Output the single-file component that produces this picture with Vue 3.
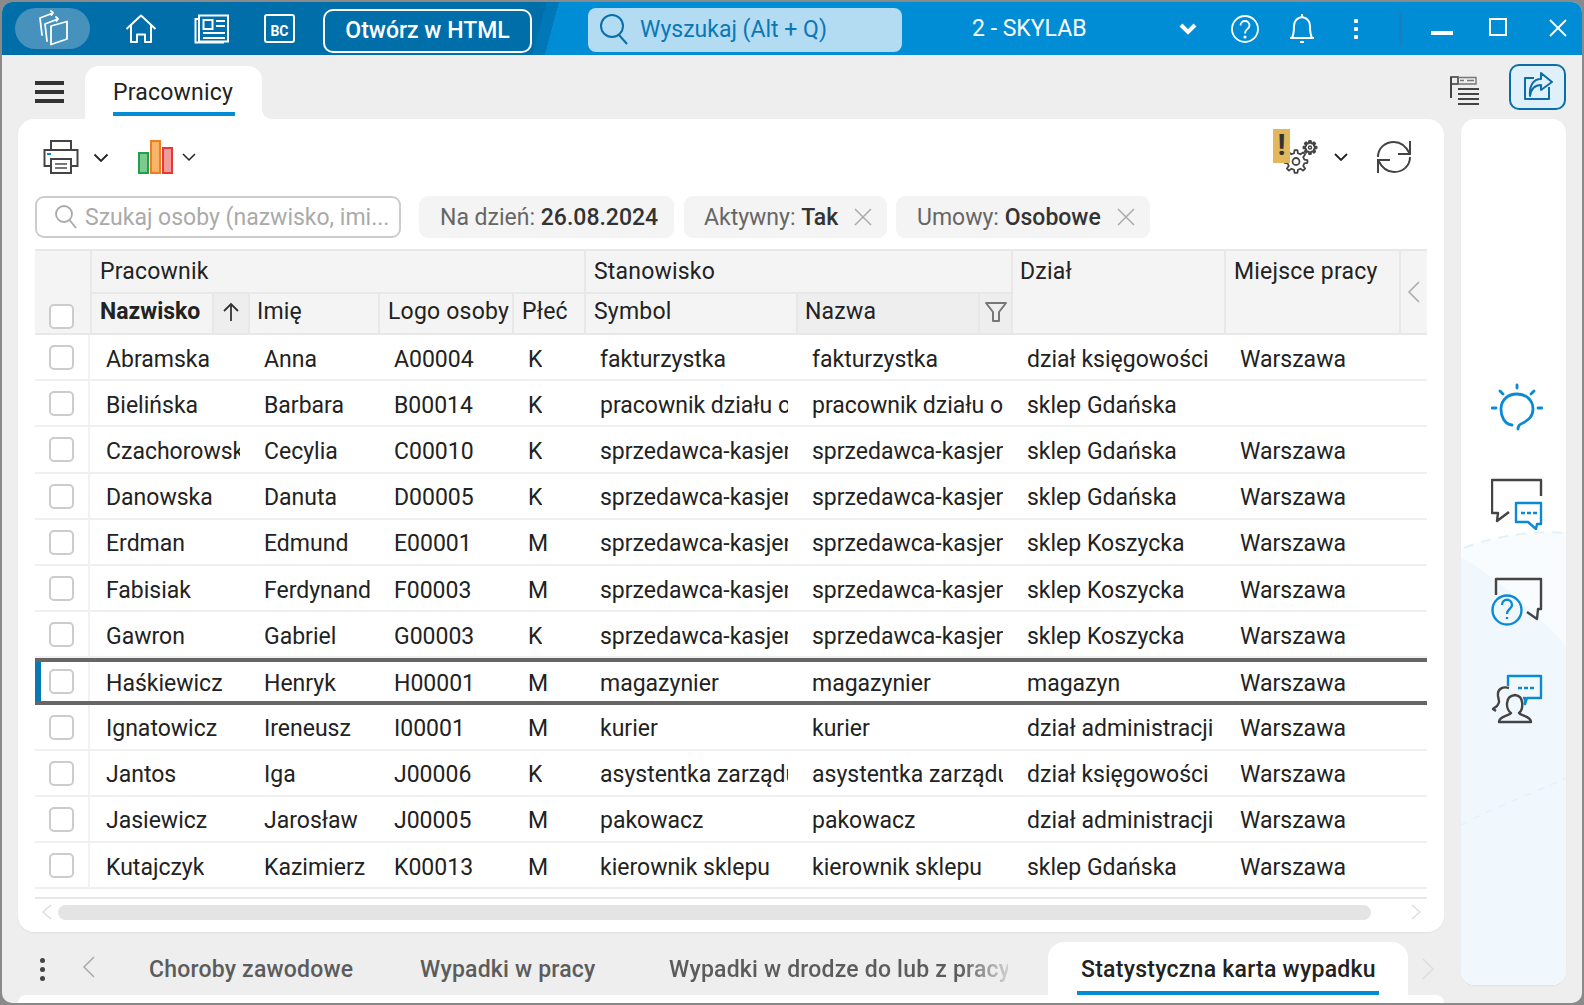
<script setup>
const rows = [
  ['Abramska','Anna','A00004','K','fakturzystka','fakturzystka','dział księgowości','Warszawa'],
  ['Bielińska','Barbara','B00014','K','pracownik działu obsługi','pracownik działu obsługi','sklep Gdańska',''],
  ['Czachorowska','Cecylia','C00010','K','sprzedawca-kasjer','sprzedawca-kasjer','sklep Gdańska','Warszawa'],
  ['Danowska','Danuta','D00005','K','sprzedawca-kasjer','sprzedawca-kasjer','sklep Gdańska','Warszawa'],
  ['Erdman','Edmund','E00001','M','sprzedawca-kasjer','sprzedawca-kasjer','sklep Koszycka','Warszawa'],
  ['Fabisiak','Ferdynand','F00003','M','sprzedawca-kasjer','sprzedawca-kasjer','sklep Koszycka','Warszawa'],
  ['Gawron','Gabriel','G00003','K','sprzedawca-kasjer','sprzedawca-kasjer','sklep Koszycka','Warszawa'],
  ['Haśkiewicz','Henryk','H00001','M','magazynier','magazynier','magazyn','Warszawa'],
  ['Ignatowicz','Ireneusz','I00001','M','kurier','kurier','dział administracji','Warszawa'],
  ['Jantos','Iga','J00006','K','asystentka zarządu','asystentka zarządu','dział księgowości','Warszawa'],
  ['Jasiewicz','Jarosław','J00005','M','pakowacz','pakowacz','dział administracji','Warszawa'],
  ['Kutajczyk','Kazimierz','K00013','M','kierownik sklepu','kierownik sklepu','sklep Gdańska','Warszawa'],
]
function gear(cx, cy, ro, ri, n) {
  const pts = []
  const step = (Math.PI * 2) / n
  for (let i = 0; i < n; i++) {
    const a = i * step
    const w = step * 0.2
    pts.push([ri, a - w * 1.5], [ro, a - w * 0.8], [ro, a + w * 0.8], [ri, a + w * 1.5])
  }
  return pts
    .map(([r, a], i) => `${i ? 'L' : 'M'}${(cx + r * Math.cos(a)).toFixed(2)} ${(cy + r * Math.sin(a)).toFixed(2)}`)
    .join(' ') + ' Z'
}
const gearBig = gear(23, 27.5, 11.5, 8.5, 8)
const gearSmall = gear(37, 13.5, 6.5, 4.5, 8)
</script>

<template>
  <div class="window">
    <header class="topbar">
      <div class="brand">
        <svg width="38" height="40" viewBox="0 0 38 40" fill="none" stroke="#fff" stroke-width="1.800" stroke-linejoin="round" stroke-linecap="round">
          <path d="M17 17 L33 12.500 V30 L17 35.500 Z" />
          <path d="M13 32 L11 15 L24 10 M22 8 L24 10 L22.500 12" />
          <path d="M8 26 L6 9 L19 4 M17 2 L19 4 L17.500 6" />
        </svg>
      </div>
      <svg class="ic-home" width="32" height="30" viewBox="0 0 32 30" fill="none" stroke="#fff" stroke-width="2" stroke-linejoin="round">
        <path d="M1.500 15 L16 1.500 L30.500 15" />
        <path d="M6 11 V28 H12 V20.500 H20 V28 H26 V11" />
      </svg>
      <svg class="ic-news" width="36" height="30" viewBox="0 0 36 30" fill="none" stroke="#fff" stroke-width="2">
        <rect x="5" y="1.500" width="29" height="26" />
        <path d="M5 5 H1.500 V28.500 H30" />
        <rect x="9.500" y="6" width="9" height="9" />
        <path d="M22 7 H31 M22 12 H31 M9 19 H31 M9 24 H31" />
      </svg>
      <div class="ic-bc"><span>BC</span></div>
      <button class="html-btn">Otwórz w HTML</button>
      <div class="top-search">
        <svg width="34" height="34" viewBox="0 0 34 34" fill="none" stroke="#0a6ea8" stroke-width="2">
          <circle cx="15" cy="13" r="11" />
          <path d="M22 22 L30 31" />
        </svg>
        <span>Wyszukaj (Alt + Q)</span>
      </div>
      <div class="company">2 - SKYLAB</div>
      <svg class="ic-chev" width="18" height="14" viewBox="0 0 18 14" fill="none" stroke="#fff" stroke-width="4"><path d="M2 3 L9 10 L16 3" /></svg>
      <svg class="ic-help" width="30" height="30" viewBox="0 0 30 30" fill="none" stroke="#fff" stroke-width="1.800">
        <circle cx="15" cy="15" r="13" />
        <path d="M10.500 11.500 C10.500 5.500 19.500 5.500 19.500 11.500 C19.500 15 15 15 15 19.500" />
        <circle cx="15" cy="23" r="0.700" />
      </svg>
      <svg class="ic-bell" width="26" height="32" viewBox="0 0 26 32" fill="none" stroke="#fff" stroke-width="2" stroke-linejoin="round">
        <path d="M3 25 C5 21 5 17 5 13 C5 8 8 5 13 4 C18 5 21 8 21 13 C21 17 21 21 23 25 Z" />
        <path d="M13 1 V4 M1 25 H25" />
        <path d="M11 29 H15" />
      </svg>
      <div class="ic-dots"><i></i><i></i><i></i></div>
      <div class="top-div"></div>
      <div class="win-min"></div>
      <div class="win-max"></div>
      <svg class="win-close" width="20" height="18" viewBox="0 0 20 18" fill="none" stroke="#fff" stroke-width="1.800"><path d="M2 1 L18 17 M18 1 L2 17" /></svg>
    </header>

    <div class="tabs-row">
      <div class="hamburger"><i></i><i></i><i></i></div>
      <div class="main-tab"><span>Pracownicy</span></div>
      <svg class="ic-flaglist" width="34" height="30" viewBox="0 0 34 30" fill="none" stroke="#444" stroke-width="2">
        <path d="M2 1 V22" />
        <rect x="2" y="1" width="7" height="7" stroke-width="1.600" />
        <path d="M9 1.500 H27 V8 H9" stroke="#777" stroke-width="1.400" />
        <path d="M11 4.500 H15 M18 4.500 H25" stroke="#777" stroke-width="1.400" />
        <path d="M9 13 H30 M9 18 H30 M9 23 H30 M9 28 H30" />
      </svg>
      <div class="share-btn">
        <svg width="30" height="30" viewBox="0 0 30 30" fill="none" stroke="#0a6ea8" stroke-width="2" stroke-linejoin="round">
          <path d="M11 6 H2 V27 H26 V15" />
          <path d="M18 1 L29 10 L18 18 V13 C12 13 8 17 7 24 C6 14 10 7 18 7 Z" />
        </svg>
      </div>
    </div>

    <div class="body">
      <div class="column">
        <main class="card">
          <div class="toolbar">
            <svg width="36" height="34" viewBox="0 0 36 34" fill="none" stroke="#444" stroke-width="2">
              <path d="M8 10 V1 H28 V10" />
              <path d="M8 26 H1.500 V10 H34.500 V26 H28" />
              <rect x="8" y="19" width="20" height="14" />
              <path d="M12 24 H24 M12 28 H24" stroke="#777" />
              <path d="M4 14 H8" stroke="#0a8ad4" />
            </svg>
            <svg class="chev" width="16" height="10" viewBox="0 0 16 10" fill="none" stroke="#222" stroke-width="1.800"><path d="M1.500 1.500 L8 8 L14.500 1.500" /></svg>
            <svg class="ic-chart" width="36" height="34" viewBox="0 0 36 34">
              <rect x="1" y="13" width="9" height="20" fill="#7dc98f" stroke="#1fa049" stroke-width="2" />
              <rect x="13" y="1" width="9" height="32" fill="#f8b468" stroke="#ef7d22" stroke-width="2" />
              <rect x="25" y="8" width="9" height="25" fill="#f29b9b" stroke="#e53935" stroke-width="2" />
            </svg>
            <svg class="chev chev2" width="14" height="9" viewBox="0 0 14 9" fill="none" stroke="#222" stroke-width="1.500"><path d="M1 1 L7 7 L13 1" /></svg>
            <div class="spacer"></div>
            <div class="gears">
              <svg width="46" height="46" viewBox="0 0 46 46" fill="none" stroke="#444" stroke-width="1.800" stroke-linejoin="round">
                <path :d="gearBig" />
                <circle cx="23" cy="27.500" r="3.500" />
                <path :d="gearSmall" stroke-width="2" />
                <circle cx="37" cy="13.500" r="1.500" stroke-width="1.400" />
              </svg>
              <div class="warn">!</div>
            </div>
            <svg class="chev chev3" width="14" height="9" viewBox="0 0 14 9" fill="none" stroke="#222" stroke-width="1.800"><path d="M1 1 L7 7 L13 1" /></svg>
            <svg class="ic-refresh" width="36" height="34" viewBox="0 0 36 34" fill="none" stroke="#444" stroke-width="2">
              <path d="M2 17 C2 8 9 2 18 2 C25 2 30 6 34 14 M34 1 V14 H22" />
              <path d="M34 17 C34 26 27 32 18 32 C11 32 6 28 2 20 M2 33 V20 H14" />
            </svg>
          </div>

          <div class="filters">
            <div class="search">
              <svg width="24" height="26" viewBox="0 0 24 26" fill="none" stroke="#aaa" stroke-width="1.800">
                <circle cx="10" cy="10" r="8" />
                <path d="M15.500 16 L22 24" />
              </svg>
              <span>Szukaj osoby (nazwisko, imi...</span>
            </div>
            <div class="chip c1"><span class="lbl">Na dzień: </span><b>26.08.2024</b></div>
            <div class="chip c2">
              <span class="lbl">Aktywny: </span><b>Tak</b>
              <svg width="18" height="18" viewBox="0 0 18 18" stroke="#aaa" stroke-width="1.500"><path d="M1 1 L17 17 M17 1 L1 17" /></svg>
            </div>
            <div class="chip c3">
              <span class="lbl">Umowy: </span><b>Osobowe</b>
              <svg width="18" height="18" viewBox="0 0 18 18" stroke="#aaa" stroke-width="1.500"><path d="M1 1 L17 17 M17 1 L1 17" /></svg>
            </div>
          </div>

          <div class="thead">
            <div class="th chk-h"><span class="cb"></span></div>
            <div class="th g1">Pracownik</div>
            <div class="th g2">Stanowisko</div>
            <div class="th g3">Dział</div>
            <div class="th g4">Miejsce pracy</div>
            <div class="th g5">
              <svg width="14" height="24" viewBox="0 0 14 24" fill="none" stroke="#aaa" stroke-width="1.500"><path d="M12 2 L2 12 L12 22" /></svg>
            </div>
            <div class="th sub nazw"><b>Nazwisko</b><span class="sort">
              <svg width="18" height="20" viewBox="0 0 18 20" fill="none" stroke="#333" stroke-width="1.800"><path d="M9 19 V2 M2 9 L9 2 L16 9" /></svg>
            </span></div>
            <div class="th sub imie">Imię</div>
            <div class="th sub">Logo osoby</div>
            <div class="th sub">Płeć</div>
            <div class="th sub">Symbol</div>
            <div class="th sub nazwa"><span class="nm">Nazwa</span><span class="flt">
              <svg width="24" height="22" viewBox="0 0 24 22" fill="none" stroke="#777" stroke-width="2" stroke-linejoin="round"><path d="M2 2 H22 L15 11 V20 H9 V11 Z" /></svg>
            </span></div>
          </div>

          <div class="rows">
            <div v-for="(r, i) in rows" :key="i" class="row" :class="{ sel: r[0] === 'Haśkiewicz' }">
              <div class="td chk"><span class="cb"></span></div>
              <div v-for="(c, j) in r" :key="j" class="td"><span>{{ c }}</span></div>
              <div class="td"></div>
            </div>
          </div>

          <div class="scroll">
            <svg width="12" height="16" viewBox="0 0 12 16" fill="none" stroke="#ddd" stroke-width="1.500"><path d="M10 1 L2 8 L10 15" /></svg>
            <div class="thumb"></div>
            <svg width="12" height="16" viewBox="0 0 12 16" fill="none" stroke="#ddd" stroke-width="1.500"><path d="M2 1 L10 8 L2 15" /></svg>
          </div>
        </main>

        <nav class="bottom-tabs">
          <div class="vdots"><i></i><i></i><i></i></div>
          <svg class="bt-prev" width="14" height="24" viewBox="0 0 14 24" fill="none" stroke="#aaa" stroke-width="1.500"><path d="M12 2 L2 12 L12 22" /></svg>
          <div class="bt t1">Choroby zawodowe</div>
          <div class="bt t2">Wypadki w pracy</div>
          <div class="bt t3">Wypadki w drodze do lub z pracy</div>
          <div class="bt active"><span>Statystyczna karta wypadku</span></div>
          <svg class="bt-next" width="14" height="24" viewBox="0 0 14 24" fill="none" stroke="#ddd" stroke-width="1.500"><path d="M2 2 L12 12 L2 22" /></svg>
        </nav>
        <div class="under-card"></div>
      </div>

      <aside class="side">
        <svg class="side-bg" width="105" height="866" viewBox="0 0 105 866" fill="none">
          <path d="M0 430 C30 418 70 412 105 413 V866 H0 Z" fill="#f8fcfe" />
          <path d="M0 438 C40 460 75 496 105 526 V866 H0 Z" fill="#f1f8fd" />
          <path d="M3 429 C30 418 70 411 105 414" stroke="#e3f1fa" stroke-width="2" stroke-dasharray="10 8" />
          <path d="M0 706 C30 690 70 675 105 659" stroke="#e3f1fa" stroke-width="1.500" stroke-dasharray="7 7" />
        </svg>
        <svg class="si" width="52" height="48" viewBox="0 0 52 48" fill="none" stroke="#0a8ad4" stroke-width="2.800" stroke-linecap="round">
          <path d="M26 2 V5 M9 8 L12 11 M43 8 L40 11 M1 25 H5 M47 25 H51" />
          <path d="M21 42 C13 41 10 33 10 26 C10 17 17 11 26 11 C35 11 42 17 42 26 C42 34 37 37 32 40 C29 41 27 43 27 46" />
        </svg>
        <svg class="si s2" width="52" height="52" viewBox="0 0 52 52" fill="none" stroke-width="2.400" stroke-linejoin="round">
          <path d="M18 34 L6 43 L7 35 H1 V2 H50 V18" stroke="#444" />
          <path d="M25 25 H50 V46 L46 46 L45 51 L37 44 H25 Z" fill="#fff" stroke="#0a8ad4" />
          <path d="M30 35 H34 M36 35 H40 M42 35 H46" stroke="#0a8ad4" />
        </svg>
        <svg class="si s3" width="52" height="50" viewBox="0 0 52 50" fill="none" stroke-width="2.400" stroke-linejoin="round">
          <path d="M5 18 V2 H50 V32 H47 L46 42 L36 35" stroke="#444" />
          <circle cx="16" cy="33" r="14.500" stroke="#0a8ad4" />
          <path d="M11 28 C11 21 21 21 21 28 C21 32 16 32 16 37 M16 40 V42" stroke="#0a8ad4" />
        </svg>
        <svg class="si s4" width="52" height="50" viewBox="0 0 52 50" fill="none" stroke-width="2.400" stroke-linejoin="round">
          <path d="M17 12 V2 H50 V24 H36 L34 30 V24 H32" stroke="#0a8ad4" />
          <path d="M27 14 H31 M33 14 H37 M39 14 H43" stroke="#0a8ad4" />
          <path d="M8 48 C8 42 18 42 20 39 C15 36 13 22 24 21 C34 22 32 36 28 39 C30 42 40 42 40 48 Z" stroke="#444" />
          <path d="M18 14 C12 12 6 15 7 22 C8 27 9 28 6 32 L2 35 L5 37" stroke="#444" />
        </svg>
      </aside>
    </div>
  </div>
</template>

<style>
html, body { margin: 0; background: #8a8a8a; overflow: hidden; }
</style>

<style scoped>
.window {
  --grid: 55px 158px 130px 134px 72px 212px 215px 213px 175px 28px;
  position: relative;
  box-sizing: border-box;
  margin: 2px 2px 0;
  width: 1580px;
  height: 1001px;
  background: #eee;
  border-radius: 10px;
  overflow: hidden;
  font-family: Roboto, sans-serif;
  font-size: 23px;
  color: #222;
}
.topbar {
  display: flex;
  align-items: center;
  height: 53px;
  background: linear-gradient(105deg, #006ea8 0, #006ea8 526px, #0078b8 526px, #0078b8 538px, #008dd6 538px);
  color: #fff;
  position: relative;
}
.brand {
  margin-left: 13px;
  width: 75px;
  height: 41px;
  border-radius: 21px;
  background: #4692bc;
  display: flex;
  align-items: center;
  justify-content: center;
}
.ic-home { margin-left: 35px; }
.ic-news { margin-left: 37px; }
.ic-bc {
  margin-left: 34px;
  width: 31px;
  height: 29px;
  border: 2px solid #fff;
  border-radius: 3px;
  box-sizing: border-box;
  display: flex;
  align-items: flex-end;
  justify-content: center;
  font-size: 14px;
  font-weight: 700;
  line-height: 20px;
}
.html-btn {
  margin-left: 28px;
  width: 209px;
  height: 44px;
  margin-top: 4px;
  background: #006ea8;
  border: 2px solid #fff;
  border-radius: 10px;
  color: #fff;
  font: 500 23px Roboto, sans-serif;
  padding: 0;
}
.top-search {
  margin-left: 56px;
  width: 314px;
  height: 44px;
  margin-top: 2px;
  background: #b3dcf3;
  border-radius: 8px;
  display: flex;
  align-items: center;
  color: #0a78b5;
  padding-left: 9px;
  box-sizing: border-box;
}
.top-search span { margin-left: 9px; }
.company { margin-left: 70px; width: 207px; font-size: 23px; }
.ic-help { margin-left: 33px; }
.ic-bell { margin-left: 29px; }
.ic-dots { margin-left: 39px; width: 5px; display: flex; flex-direction: column; gap: 4px; }
.ic-dots i { display: block; width: 4px; height: 4px; background: #fff; border-radius: 1px; }
.top-div { margin-left: 40px; width: 3px; height: 33px; background: #1b7fba; }
.win-min { margin-left: 29px; width: 22px; height: 4px; background: #fff; margin-top: 8px; }
.win-max { margin-left: 36px; width: 14px; height: 14px; border: 2px solid #fff; margin-top: -4px; }
.win-close { margin-left: 41px; margin-top: -2px; }

.tabs-row {
  display: flex;
  height: 64px;
  position: relative;
  align-items: flex-start;
}
.hamburger {
  margin-left: 33px;
  margin-top: 26px;
  width: 29px;
  display: flex;
  flex-direction: column;
  gap: 5px;
}
.hamburger i { display: block; height: 4px; background: #333; }
.main-tab {
  position: relative;
  margin-left: 21px;
  margin-top: 11px;
  width: 177px;
  height: 53px;
  background: #fff;
  border-radius: 14px 14px 0 0;
  box-sizing: border-box;
  padding-left: 28px;
}
.main-tab::after {
  content: '';
  position: absolute;
  right: -10px;
  bottom: 0;
  width: 10px;
  height: 10px;
  background: radial-gradient(circle at 100% 0, transparent 10px, #fff 10px);
}
.main-tab span {
  display: block;
  height: 34px;
  border-bottom: 4px solid #008dd6;
  line-height: 30px;
  padding-top: 12px;
  letter-spacing: .2px;
  width: 122px;
  white-space: nowrap;
}
.ic-flaglist { margin-left: auto; margin-top: 21px; }
.share-btn {
  margin-left: 26px;
  margin-right: 16px;
  margin-top: 9px;
  width: 57px;
  height: 46px;
  box-sizing: border-box;
  border: 2px solid #0a6ea8;
  border-radius: 10px;
  background: #e0f0fa;
  display: flex;
  align-items: center;
  justify-content: center;
}

.body { display: flex; }
.column { margin-left: 16px; width: 1426px; }
.card {
  background: #fff;
  height: 813px;
  border-radius: 16px;
  box-shadow: 0 1px 1px #e0e0e0;
  padding: 0 16px 0 17px;
  box-sizing: border-box;
}
.toolbar {
  display: flex;
  align-items: center;
  height: 77px;
  box-sizing: border-box;
  padding: 0 0 2px 8px;
}
.spacer { flex: 1; }
.chev { margin-left: 14px; margin-top: 2px; }
.ic-chart { margin-left: 29px; }
.chev2 { margin-left: 8px; }
.gears { position: relative; width: 46px; height: 46px; margin-right: 15px; }
.gears svg { position: absolute; left: 0; top: 0; }
.warn {
  position: absolute;
  left: 0;
  top: -5px;
  width: 17px;
  height: 34px;
  background: #e3b85c;
  color: #333;
  font-size: 30px;
  font-weight: 700;
  line-height: 32px;
  text-align: center;
}
.chev3 { margin-left: 0; }
.ic-refresh { margin-left: 28px; margin-right: 16px; }

.filters { display: flex; gap: 10px; height: 42px; }
.search {
  width: 366px;
  box-sizing: border-box;
  height: 42px;
  border: 2px solid #ccc;
  border-radius: 9px;
  display: flex;
  align-items: center;
  padding-left: 17px;
  color: #aaa;
  margin-right: 8px;
}
.search span { margin-left: 7px; white-space: nowrap; }
.chip {
  display: flex;
  align-items: center;
  height: 42px;
  background: #f4f4f4;
  border-radius: 9px;
  box-sizing: border-box;
  padding-left: 21px;
  white-space: pre;
}
.chip b { font-weight: 500; color: #333; }
.lbl { color: #666; }
.chip svg { margin-left: 16px; }
.c1 { width: 255px; }
.c2 { width: 203px; padding-left: 20px; }
.c3 { width: 254px; margin-left: -1px; }

.thead {
  margin-top: 11px;
  display: grid;
  grid-template-columns: var(--grid);
  grid-template-rows: 41px 41px;
  background: #f4f4f4;
  border-top: 2px solid #e8e8e8;
  border-bottom: 2px solid #e8e8e8;
  width: 1392px;
  letter-spacing: .2px;
}
.th {
  border-left: 2px solid #e8e8e8;
  padding-left: 8px;
  padding-bottom: 1px;
  display: flex;
  align-items: center;
  white-space: nowrap;
  box-sizing: border-box;
  min-width: 0;
  overflow: hidden;
}
.th.sub { border-top: 2px solid #e8e8e8; padding-bottom: 5px; }
.th.imie { padding-left: 7px; }
.chk-h { grid-row: 1 / 3; grid-column: 1; border-left: 0; align-items: flex-end; padding: 0 0 4px 14px; }
.g1 { grid-column: 2 / 6; grid-row: 1; }
.g2 { grid-column: 6 / 8; grid-row: 1; }
.g3 { grid-column: 8; grid-row: 1 / 3; align-items: flex-start; padding-top: 7px; padding-left: 7px; }
.g4 { grid-column: 9; grid-row: 1 / 3; align-items: flex-start; padding-top: 7px; }
.g5 { grid-column: 10; grid-row: 1 / 3; justify-content: center; padding: 0; }
.th.nazw { padding-right: 0; padding-bottom: 0; justify-content: space-between; }
.nazw b { font-weight: 700; padding-bottom: 5px; letter-spacing: 0; }
.sort {
  width: 36px;
  align-self: stretch;
  padding-bottom: 3px;
  background: #eee;
  border-left: 2px solid #e8e8e8;
  display: flex;
  align-items: center;
  justify-content: center;
  box-sizing: border-box;
}
.th.nazwa { padding: 0 0 0 7px; justify-content: space-between; background: #eee; }
.nm { padding-bottom: 5px; }
.flt {
  width: 33px;
  align-self: stretch;
  padding-bottom: 4px;
  border-left: 2px solid #e8e8e8;
  display: flex;
  align-items: center;
  justify-content: center;
  box-sizing: border-box;
}

.row {
  display: grid;
  grid-template-columns: var(--grid);
  height: 46.2px;
  border-bottom: 2px solid #f0f0f0;
  box-sizing: border-box;
  width: 1392px;
}
.row.sel {
  border-top: 4px solid #666;
  border-bottom: 4px solid #666;
  position: relative;
}
.row.sel::before {
  content: '';
  position: absolute;
  left: 0;
  top: 0;
  bottom: 0;
  width: 6px;
  background: #0a78b5;
}
.td {
  display: flex;
  align-items: center;
  white-space: nowrap;
  padding: 4px 8px 0 16px;
  overflow: hidden;
  min-width: 0;
  color: #222;
}
.td.chk { padding: 1px 0 0 14px; border-right: 2px solid #f2f2f2; }
.td > span { overflow: hidden; }
.cb {
  display: block;
  width: 25px;
  height: 25px;
  box-sizing: border-box;
  border: 2px solid #ccc;
  border-radius: 5px;
  background: #fff;
}
.scroll {
  margin-top: 8px;
  border-top: 2px solid #e8e8e8;
  padding-top: 5px;
  width: 1392px;
  display: flex;
  align-items: center;
  gap: 5px;
  padding-left: 6px;
  box-sizing: border-box;
}
.thumb { width: 1313px; height: 15px; background: #e4e4e4; border-radius: 8px; }
.scroll svg:last-child { margin-left: 34px; }

.bottom-tabs {
  display: flex;
  align-items: flex-start;
  height: 53px;
  margin-top: 10px;
  position: relative;
  font-weight: 500;
  color: #5c5c5c;
  letter-spacing: .2px;
}
.vdots { margin: 16px 0 0 22px; width: 6px; display: flex; flex-direction: column; gap: 4px; }
.vdots i { display: block; width: 5px; height: 5px; border-radius: 50%; background: #444; }
.bt-prev { margin: 13px 0 0 36px; }
.bt { white-space: nowrap; line-height: 56px; }
.t1 { margin-left: 53px; width: 201px; }
.t2 { margin-left: 70px; width: 175px; }
.t3 {
  margin-left: 74px;
  width: 339px;
  overflow: hidden;
  -webkit-mask-image: linear-gradient(90deg, #000 86%, #0003 100%);
  mask-image: linear-gradient(90deg, #000 86%, #0003 100%);
}
.active {
  margin-left: 40px;
  width: 360px;
  height: 53px;
  background: #fff;
  border-radius: 16px 16px 0 0;
  color: #222;
  box-sizing: border-box;
  padding-left: 29px;
  letter-spacing: .25px;
}
.active span {
  display: block;
  width: 302px;
  border-bottom: 4px solid #008dd6;
  padding-left: 4px;
  box-sizing: border-box;
  height: 53px;
}
.bt-next { margin: 15px 0 0 13px; }
.under-card { height: 8px; background: #fff; border-radius: 12px 12px 0 0; }

.side {
  position: relative;
  margin-left: 17px;
  width: 105px;
  height: 866px;
  background: #fff;
  border-radius: 14px;
  box-shadow: 0 1px 1px #e0e0e0;
  overflow: hidden;
  display: flex;
  flex-direction: column;
  align-items: center;
}
.side-bg { position: absolute; left: 0; top: 0; }
.si { position: relative; margin-top: 264px; margin-left: 6px; }
.s2 { margin-top: 47px; }
.s3 { margin-top: 47px; }
.s4 { margin-top: 47px; }
</style>
